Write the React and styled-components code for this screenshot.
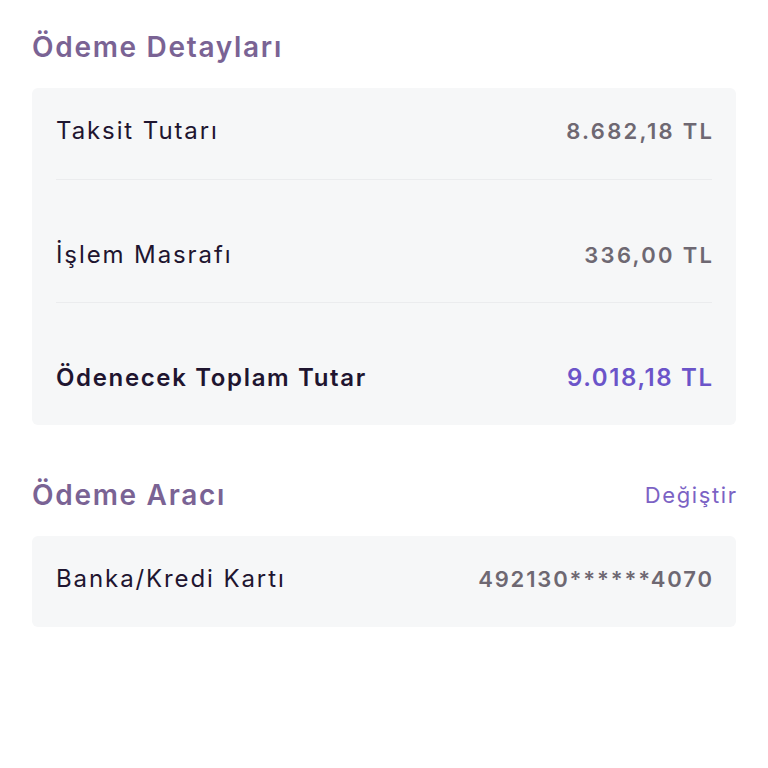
import React from 'react';
import styled, { createGlobalStyle } from 'styled-components';

const GlobalStyle = createGlobalStyle`
  body {
    margin: 0;
    background: #fff;
    font-family: Inter, "Noto Sans", sans-serif;
  }
`;

const Page = styled.div`
  width: 768px;
  padding: 26px 32px 0;
  box-sizing: border-box;
`;

const SectionHead = styled.div`
  display: flex;
  align-items: center;
  justify-content: space-between;
  height: 42px;
  margin-bottom: 20px;
`;

const Title = styled.h2`
  margin: 0;
  font-size: 28px;
  font-weight: 600;
  color: #7a6394;
  letter-spacing: 1.7px;
`;

const Action = styled.button`
  border: none;
  background: none;
  padding: 0;
  margin-right: -1.6px;
  font-family: inherit;
  font-size: 22px;
  font-weight: 400;
  letter-spacing: 1.6px;
  color: #7b62c4;
`;

const Card = styled.div`
  background: #f6f7f8;
  border-radius: 6px;
  padding: 0 24px;
  margin-bottom: ${(p) => p.gap || 0}px;
`;

const Row = styled.div`
  display: flex;
  align-items: center;
  justify-content: space-between;
  line-height: 28px;
  padding: 29px 0 34px;
  & + & {
    border-top: 1px solid #ebecee;
    padding-top: 61px;
    padding-bottom: 33px;
  }
`;

const Label = styled.span`
  font-size: 24px;
  font-weight: ${(p) => (p.strong ? 600 : 400)};
  letter-spacing: ${(p) => (p.strong ? 1.65 : 1.9)}px;
  color: #1f1530;
`;

const Value = styled.span`
  --ls: ${(p) => (p.accent ? 1.6 : p.spacing || 2.3)}px;
  margin-right: calc(var(--ls) * -1);
  font-size: ${(p) => (p.accent ? 24 : 22)}px;
  font-weight: 600;
  letter-spacing: var(--ls);
  color: ${(p) => (p.accent ? '#6b54c9' : '#6e6872')};
`;

const details = [
  { label: 'Taksit Tutarı', value: '8.682,18 TL' },
  { label: 'İşlem Masrafı', value: '336,00 TL' },
  { label: 'Ödenecek Toplam Tutar', value: '9.018,18 TL', total: true },
];

const App = () => (
  <>
    <GlobalStyle />
    <Page>
      <SectionHead>
        <Title>Ödeme Detayları</Title>
      </SectionHead>
      <Card gap={49}>
        {details.map((d) => (
          <Row key={d.label}>
            <Label strong={d.total}>{d.label}</Label>
            <Value accent={d.total}>{d.value}</Value>
          </Row>
        ))}
      </Card>

      <SectionHead>
        <Title>Ödeme Aracı</Title>
        <Action>Değiştir</Action>
      </SectionHead>
      <Card>
        <Row>
          <Label>Banka/Kredi Kartı</Label>
          <Value spacing={1.85}>492130******4070</Value>
        </Row>
      </Card>
    </Page>
  </>
);

export default App;
